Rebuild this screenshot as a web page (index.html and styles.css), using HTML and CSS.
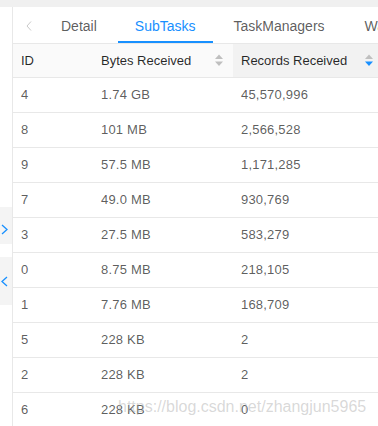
FILE: index.html
```html
<!DOCTYPE html>
<html lang="en">
<head>
    <meta charset="UTF-8">
    <meta name="viewport" content="width=device-width, initial-scale=1.0">
    <title>SubTasks</title>
    <link rel="stylesheet" href="styles.css">
</head>
<body>

    <div class="page">
        <aside class="side">
            <div class="side-btn expand">
                <svg width="7" height="11" viewBox="0 0 7 11"><polyline points="1,1 6,5.5 1,10" fill="none" stroke="#1890ff" stroke-width="1.3"/></svg>
            </div>
            <div class="side-btn collapse">
                <svg width="7" height="11" viewBox="0 0 7 11"><polyline points="6,1 1,5.5 6,10" fill="none" stroke="#1890ff" stroke-width="1.3"/></svg>
            </div>
        </aside>

        <main class="panel">
            <div class="tabs">
                <span class="tab-prev">
                    <svg width="6" height="10" viewBox="0 0 6 10"><polyline points="5,0.5 1,5 5,9.5" fill="none" stroke="#c8c8c8" stroke-width="1"/></svg>
                </span>
                <div class="tab">Detail</div>
                <div class="tab active">SubTasks</div>
                <div class="tab">TaskManagers</div>
                <div class="tab">Watermarks</div>
            </div>

            <table class="grid">
                <colgroup>
                    <col class="col-id">
                    <col class="col-bytes">
                    <col class="col-records">
                </colgroup>
                <thead>
                    <tr>
                        <th>ID</th>
                        <th>
                            <div class="th-inner">
                                <span>Bytes Received</span>
                                <svg class="sorter" width="8" height="13" viewBox="0 0 8 13"><polygon points="0,5 4,0.5 8,5" fill="#bfbfbf"/><polygon points="0,7.5 8,7.5 4,12" fill="#bfbfbf"/></svg>
                            </div>
                        </th>
                        <th class="sorted">
                            <div class="th-inner">
                                <span>Records Received</span>
                                <svg class="sorter" width="8" height="13" viewBox="0 0 8 13"><polygon points="0,5 4,0.5 8,5" fill="#bfbfbf"/><polygon points="0,7.5 8,7.5 4,12" fill="#1890ff"/></svg>
                            </div>
                        </th>
                    </tr>
                </thead>
                <tbody>
                    <tr><td>4</td><td>1.74 GB</td><td>45,570,996</td></tr>
                    <tr><td>8</td><td>101 MB</td><td>2,566,528</td></tr>
                    <tr><td>9</td><td>57.5 MB</td><td>1,171,285</td></tr>
                    <tr><td>7</td><td>49.0 MB</td><td>930,769</td></tr>
                    <tr><td>3</td><td>27.5 MB</td><td>583,279</td></tr>
                    <tr><td>0</td><td>8.75 MB</td><td>218,105</td></tr>
                    <tr><td>1</td><td>7.76 MB</td><td>168,709</td></tr>
                    <tr><td>5</td><td>228 KB</td><td>2</td></tr>
                    <tr><td>2</td><td>228 KB</td><td>2</td></tr>
                    <tr><td>6</td><td>228 KB</td><td>0</td></tr>
                </tbody>
            </table>
        </main>

        <div class="watermark">https://blog.csdn.net/zhangjun5965</div>
    </div>

</body>
</html>
```

FILE: styles.css
```css
html, body {
    margin: 0;
    height: 100%;
    overflow: hidden;
}
body {
    font-family: "Liberation Sans", Arial, sans-serif;
    background-color: #f0f0f0;
    color: rgba(0, 0, 0, 0.65);
}
.page {
    position: relative;
    display: flex;
    margin-top: 7px;
    height: 419px;
    background: white;
    overflow: hidden;
}

/* Left sidebar strip */
.side {
    width: 12px;
    flex-shrink: 0;
    background: white;
    padding-top: 200px;
}
.side-btn {
    background-color: #f4f4f4;
    display: flex;
    align-items: center;
    padding-left: 1px;
}
.side-btn.expand {
    height: 29px;
    padding-top: 8px;
}
.side-btn.collapse {
    height: 48px;
    margin-top: 13px;
}

.panel {
    flex: 1;
    min-width: 0;
    border-left: 1px solid #e8e8e8;
    overflow: hidden;
}

/* Tabs */
.tabs {
    display: flex;
    height: 36px;
    border-bottom: 1px solid #e8e8e8;
    white-space: nowrap;
    font-size: 14px;
}
.tab-prev {
    width: 31px;
    flex-shrink: 0;
    display: flex;
    align-items: center;
    justify-content: center;
    padding-top: 2px;
}
.tab {
    padding: 9px 17px 0;
    line-height: 20px;
    height: 25px;
    margin-right: 4px;
    color: rgba(0, 0, 0, 0.65);
    border-bottom: 2px solid transparent;
}
.tab.active {
    color: #1890ff;
    border-bottom-color: #1890ff;
}
.tabs .tab:last-child {
    padding-left: 19px;
}

/* Table */
.grid {
    table-layout: fixed;
    width: 370px;
    border-collapse: separate;
    border-spacing: 0;
    font-size: 13px;
}
.col-id { width: 80px; }
.col-bytes { width: 140px; }
.col-records { width: 150px; }
th, td {
    padding: 0 8px;
    text-align: left;
    border-bottom: 1px solid #e8e8e8;
    white-space: nowrap;
}
th {
    line-height: 33px;
    font-weight: normal;
    color: rgba(0, 0, 0, 0.85);
    background-color: #fafafa;
}
th.sorted {
    background-color: #f2f2f2;
}
.th-inner {
    display: flex;
    align-items: center;
    justify-content: space-between;
    padding-right: 2px;
}
.sorter {
    display: block;
}
td {
    line-height: 34px;
    letter-spacing: 0.2px;
}

.watermark {
    position: absolute;
    left: 118px;
    top: 390px;
    font-size: 16px;
    line-height: 20px;
    color: rgba(170, 170, 170, 0.45);
    white-space: nowrap;
}
```
